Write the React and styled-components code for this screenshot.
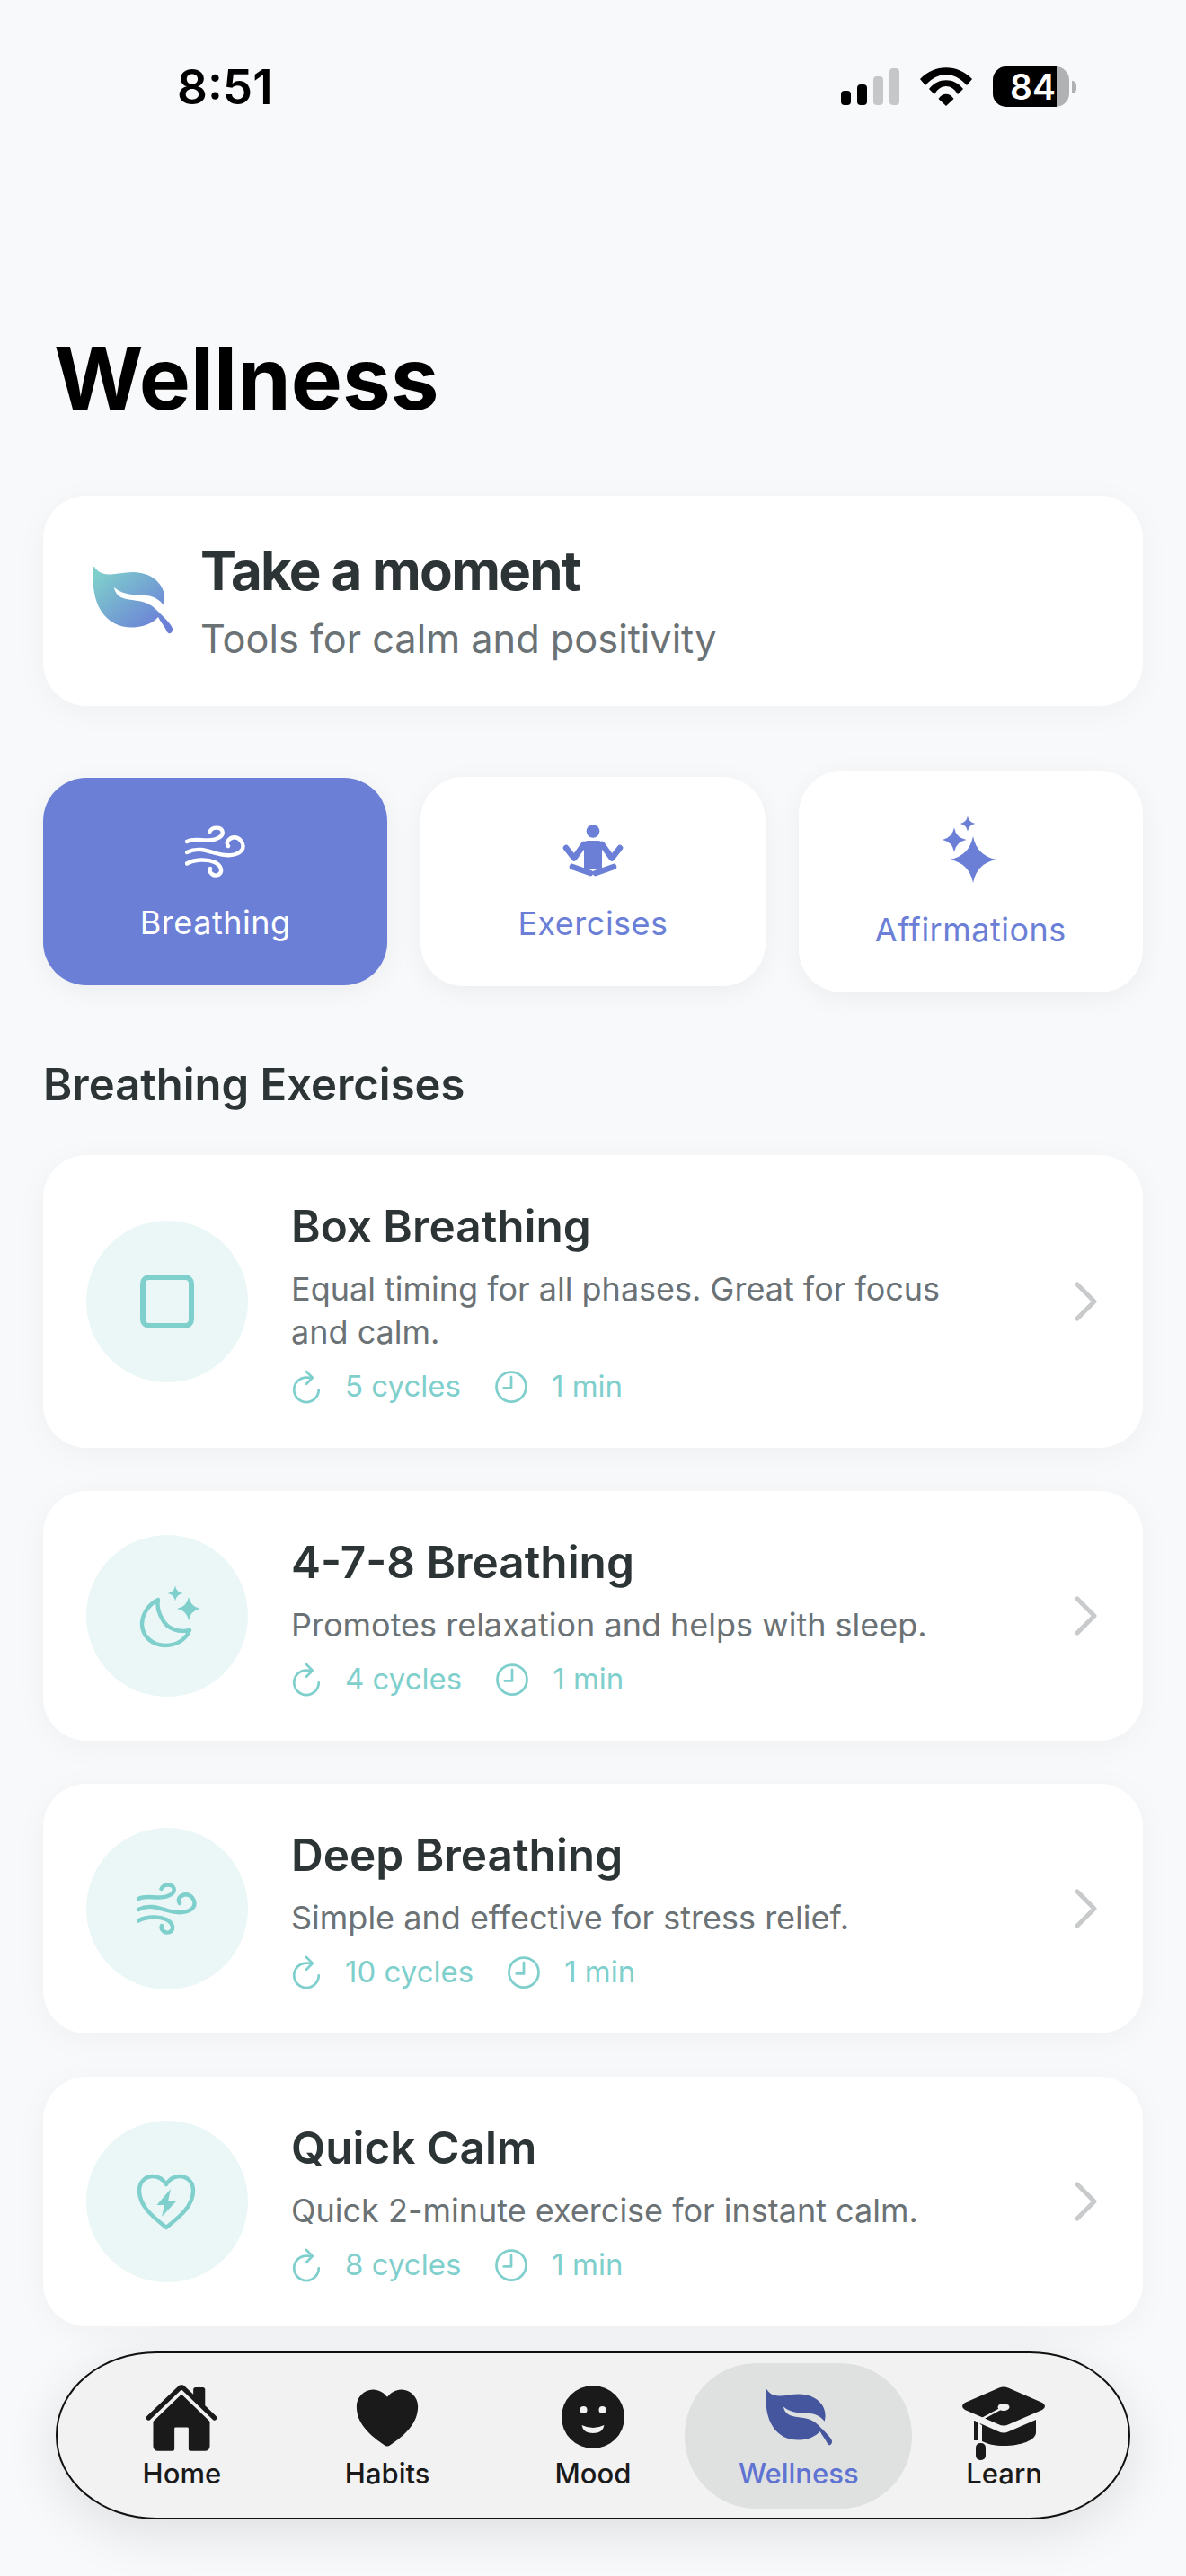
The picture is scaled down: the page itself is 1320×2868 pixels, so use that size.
import React from "react";
import styled, { createGlobalStyle } from "styled-components";
import { IoHome, IoHeart, IoRefreshOutline, IoTimeOutline } from "react-icons/io5";

const TEAL = "#7fcfcd";
const BLUE = "#6b7fd7";

const GlobalStyle = createGlobalStyle`
  html, body {
    margin: 0;
    padding: 0;
    background: #f8f9fb;
  }
  * {
    box-sizing: border-box;
  }
`;

// four pointed star, used by the sparkles and the moon icon
const star = (cx, cy, r) => {
  const k = r * 0.16;
  return `M${cx} ${cy - r}Q${cx + k} ${cy - k} ${cx + r} ${cy}Q${cx + k} ${cy + k} ${cx} ${cy + r}Q${cx - k} ${cy + k} ${cx - r} ${cy}Q${cx - k} ${cy - k} ${cx} ${cy - r}Z`;
};

const LEAF_PATH =
  "M2 0C5 5 10 8 18 8.500C28 9 40 4 54 7C70 10 80 22 80 34C80 38 79.500 41 79 42.500C75 38 70 33 60 32C48 30.500 36 33 24 23C25 30 30 35 40 36.500C52 38 62 39 70 47C79 56 88 64 89 69C89.500 74 85 76 83 72.500C80 66 76 62 73 56C68 62 58 67 46 67.500C30 68 18 62 10 50C2 38 0 22 0 4C0 1 1 -1 2 0Z";

const HeroLeaf = styled.svg`
  flex: none;
  display: block;
`;

function GradientLeaf() {
  return (
    <HeroLeaf width="89" height="76" viewBox="0 0 89 76">
      <defs>
        <linearGradient id="leafGradient" x1="0.05" y1="0.1" x2="0.85" y2="0.9">
          <stop offset="0" stopColor="#7fd0cc" />
          <stop offset="1" stopColor={BLUE} />
        </linearGradient>
      </defs>
      <path d={LEAF_PATH} fill="url(#leafGradient)" />
    </HeroLeaf>
  );
}

const NavLeafSvg = styled.svg`
  display: block;
  margin: 10px auto 0;
`;

function NavLeaf() {
  return (
    <NavLeafSvg width="74" height="64" viewBox="0 0 89 76">
      <path d={LEAF_PATH} fill="currentColor" />
    </NavLeafSvg>
  );
}

function WindIcon({ color }) {
  return (
    <svg width="68" height="58" viewBox="0 0 68 58" fill="none" stroke={color} strokeWidth="4.400" strokeLinecap="round">
      <path d="M2 18C10 14 18 17 26 16.500C36 16 43 12 41.500 6.500C40 1.500 30 1 27.500 7" />
      <path d="M2 30C14 24 24 28 34 31C44 34 58 35 63.500 27C67 20 60 12 53 13.500C47 15 45.500 20 48 23" />
      <path d="M2 42.500C10 38 24 37 33 41C41 45 42 52 37 55C32 57 26 53 28 48" />
    </svg>
  );
}

function MeditationIcon() {
  return (
    <svg width="68" height="60" viewBox="0 0 68 60" fill={BLUE}>
      <circle cx="34" cy="7.500" r="7.300" />
      <path d="M28 18H40C42 18 43.500 19 44 21V49H24V21C24.500 19 26 18 28 18Z" />
      <g fill="none" stroke={BLUE} strokeWidth="6.600" strokeLinecap="round" strokeLinejoin="round">
        <path d="M4 26L13 37.500L24 22" />
        <path d="M64 26L55 37.500L44 22" />
        <path d="M11 47L31 54" />
        <path d="M57 47L37 54" />
      </g>
    </svg>
  );
}

function SparklesIcon() {
  return (
    <svg width="62" height="80" viewBox="0 0 62 80" fill={BLUE}>
      <path d={star(34, 49, 26)} />
      <path d={star(13, 27, 13.5)} />
      <path d={star(28, 9, 8.5)} />
    </svg>
  );
}

function SquareIcon() {
  return (
    <svg width="60" height="60" viewBox="0 0 60 60" fill="none" stroke={TEAL} strokeWidth="6">
      <rect x="3" y="3" width="54" height="54" rx="7" />
    </svg>
  );
}

function MoonIcon() {
  return (
    <svg width="72" height="72" viewBox="0 0 72 72" fill="none">
      <path
        d="M26 18C12 25 8 38 8 45C8 59 20 69 34 69C47 69 57 62 61 52C48 55 37 50 32 42C27 34 24 26 26 18Z"
        stroke={TEAL}
        strokeWidth="4.400"
        strokeLinejoin="round"
      />
      <path d={star(60, 28, 13)} fill={TEAL} />
      <path d={star(45, 11, 8.5)} fill={TEAL} />
    </svg>
  );
}

function HeartBoltIcon() {
  return (
    <svg width="72" height="72" viewBox="0 0 72 72" fill="none">
      <path
        d="M35 65C20 53 5 41 5 24C5 14 12 8 20 8C27 8 32 12 35 17C38 12 43 8 50 8C58 8 65 14 65 24C65 41 50 53 35 65Z"
        stroke={TEAL}
        strokeWidth="4.400"
        strokeLinejoin="round"
      />
      <path d="M40 22L24.500 40H33L30 53L46 36H37Z" fill={TEAL} />
    </svg>
  );
}

function FaceIcon() {
  return (
    <svg width="84" height="84" viewBox="0 0 84 84">
      <circle cx="42" cy="41" r="35" fill="#1a1a1a" />
      <circle cx="31.500" cy="33" r="4" fill="#f2f2f3" />
      <circle cx="52.500" cy="33" r="4" fill="#f2f2f3" />
      <path d="M29.500 50Q42 56 54.500 50Q53 59 42 59Q31 59 29.500 50Z" fill="#f2f2f3" />
    </svg>
  );
}

const CapSvg = styled.svg`
  display: block;
  margin: 7px 0 -5px;
`;

function CapIcon() {
  return (
    <CapSvg width="93" height="82" viewBox="0 0 93 82">
      <path d="M41 1.500Q46 -0.500 51 1.500L89 18Q95 22 89 26L52 42Q46 45 40 42L3 26Q-3 22 3 18Z" fill="#1a1a1a" />
      <path d="M13 38L40 50Q46 53 52 50L82 37V51C82 60 65 66 46 66C36 66 28 64 22 61V43L13 39Z" fill="#1a1a1a" />
      <path d="M13 38V60H18V40Z" fill="#1a1a1a" />
      <path d="M46 23L18.500 38V66" fill="none" stroke="#f2f2f3" strokeWidth="2.500" />
      <ellipse cx="46" cy="23" rx="6.500" ry="4" fill="#f2f2f3" />
      <rect x="15" y="63" width="11" height="19" rx="5" fill="#1a1a1a" />
    </CapSvg>
  );
}

const Page = styled.div`
  width: 1320px;
  height: 2868px;
  overflow: hidden;
  background: #f8f9fb;
  font-family: Inter, "Noto Sans", sans-serif;
`;

const StatusBar = styled.div`
  display: flex;
  justify-content: space-between;
  align-items: flex-start;
  height: 60px;
  margin-top: 69px;
  padding: 0 122px 0 197px;
`;

const Clock = styled.div`
  font-size: 53px;
  line-height: 57px;
  font-weight: 600;
  color: #000;
`;

const StatusIcons = styled.div`
  display: flex;
  gap: 23px;
  margin-top: 5px;
`;

const Battery = styled.div`
  display: flex;
  align-items: center;
  gap: 3px;
`;

const BatteryBody = styled.div`
  display: flex;
  width: 85px;
  height: 45px;
  border-radius: 15px;
  overflow: hidden;
  background: #b0b1b3;
`;

const BatteryFill = styled.div`
  width: 71px;
  padding-right: 1px;
  background: #000;
  color: #fff;
  font-size: 39px;
  line-height: 45px;
  font-weight: 600;
  text-align: right;
`;

const BatteryNub = styled.div`
  width: 5px;
  height: 14px;
  background: #b0b1b3;
  border-radius: 0 6px 6px 0;
`;

const PageTitle = styled.h1`
  margin: 234px 0 0;
  padding-left: 60px;
  font-size: 96px;
  line-height: 116px;
  font-weight: 700;
  color: #000;
`;

const Content = styled.main`
  display: flex;
  flex-direction: column;
  padding: 73px 48px 0;
`;

const HeroCard = styled.section`
  display: flex;
  align-items: center;
  gap: 31px;
  height: 234px;
  padding-left: 55px;
  background: #fff;
  border-radius: 48px;
  box-shadow: 0 6px 36px rgba(0, 0, 0, 0.04);
`;

const HeroTitle = styled.h2`
  margin: 0;
  font-size: 60px;
  line-height: 70px;
  font-weight: 700;
  letter-spacing: -1.7px;
  color: #2d3436;
`;

const HeroSubtitle = styled.p`
  margin: 13px 0 0;
  font-size: 43.3px;
  line-height: 56px;
  font-weight: 400;
  color: #6b7275;
`;

const Tabs = styled.div`
  display: grid;
  grid-template-columns: repeat(3, 1fr);
  gap: 37px;
  align-items: center;
  margin-top: 72px;
`;

const Tab = styled.button`
  display: flex;
  flex-direction: column;
  align-items: center;
  gap: 24px;
  padding: 48px 0;
  border: 0;
  border-radius: 48px;
  font-family: inherit;
  background: ${({ $active }) => ($active ? BLUE : "#fff")};
  color: ${({ $active }) => ($active ? "#fff" : BLUE)};
  box-shadow: 0 6px 30px rgba(0, 0, 0, 0.05);
`;

const TabIcon = styled.div`
  display: flex;
  align-items: center;
  justify-content: center;
  height: ${({ $height }) => $height}px;
`;

const TabLabel = styled.span`
  font-size: 36px;
  line-height: 44px;
  font-weight: 400;
  letter-spacing: 0.5px;
`;

const SectionTitle = styled.h3`
  margin: 73px 0 0;
  font-size: 49px;
  line-height: 60px;
  font-weight: 600;
  color: #2d3436;
`;

const ExerciseList = styled.div`
  display: flex;
  flex-direction: column;
  gap: 48px;
  margin-top: 48px;
`;

const ExerciseCard = styled.article`
  display: flex;
  align-items: center;
  padding: 48px;
  background: #fff;
  border-radius: 48px;
  box-shadow: 0 6px 36px rgba(0, 0, 0, 0.04);
`;

const IconCircle = styled.div`
  flex: none;
  display: flex;
  align-items: center;
  justify-content: center;
  width: 180px;
  height: 180px;
  margin-right: 48px;
  border-radius: 50%;
  background: #eaf7f6;
`;

const ExerciseText = styled.div`
  flex: 1;
  min-width: 0;
`;

const ExerciseTitle = styled.h4`
  margin: 0;
  font-size: 49.5px;
  line-height: 62px;
  font-weight: 600;
  color: #2d3436;
`;

const ExerciseDescription = styled.p`
  margin: 15px 0 0;
  font-size: 36px;
  line-height: 48px;
  font-weight: 400;
  color: #6b7275;
`;

const MetaRow = styled.div`
  display: flex;
  gap: 34px;
  margin: 16px 0 0 -5px;
`;

const MetaItem = styled.div`
  display: flex;
  align-items: center;
  gap: 21px;
  height: 41px;
  font-size: 33px;
  line-height: 41px;
  color: ${TEAL};
`;

const FlippedClock = styled(IoTimeOutline)`
  margin-right: 2px;
  transform: scaleX(-1);
`;

const ChevronSvg = styled.svg`
  flex: none;
  margin: 0 3px 0 90px;
`;

function Chevron() {
  return (
    <ChevronSvg width="25" height="44" viewBox="0 0 25 44" fill="none" stroke="#c8cacb" strokeWidth="5" strokeLinecap="round" strokeLinejoin="round">
      <path d="M3 3L22 22L3 41" />
    </ChevronSvg>
  );
}

const BottomNav = styled.nav`
  display: grid;
  grid-template-columns: repeat(5, minmax(0, 1fr));
  width: 1196px;
  height: 187px;
  margin: 28px 0 0 62px;
  padding: 11px 24px;
  border: 2px solid #111;
  border-radius: 112px / 93px;
  background: #f2f2f3;
  box-shadow: 0 14px 60px rgba(0, 0, 0, 0.11);
`;

const NavItem = styled.a`
  justify-self: center;
  display: flex;
  flex-direction: column;
  align-items: center;
  gap: 2px;
  width: ${({ $active }) => ($active ? "253px" : "200px")};
  height: 162px;
  padding-top: 19px;
  border-radius: 80px;
  background: ${({ $active }) => ($active ? "#dfe1e1" : "transparent")};
  color: ${({ $active }) => ($active ? "#5f73d2" : "#1a1a1a")};
`;

const NavGlyph = styled.div`
  height: 84px;
  color: ${({ $color }) => $color || "#1a1a1a"};
  svg {
    display: block;
  }
`;

const NavLabel = styled.span`
  font-size: 31px;
  line-height: 36px;
  font-weight: 500;
`;

const exercises = [
  {
    title: "Box Breathing",
    description: "Equal timing for all phases. Great for focus and calm.",
    cycles: "5 cycles",
    icon: <SquareIcon />,
  },
  {
    title: "4-7-8 Breathing",
    description: "Promotes relaxation and helps with sleep.",
    cycles: "4 cycles",
    icon: <MoonIcon />,
  },
  {
    title: "Deep Breathing",
    description: "Simple and effective for stress relief.",
    cycles: "10 cycles",
    icon: <WindIcon color={TEAL} />,
  },
  {
    title: "Quick Calm",
    description: "Quick 2-minute exercise for instant calm.",
    cycles: "8 cycles",
    icon: <HeartBoltIcon />,
  },
];

const navItems = [
  { label: "Home", icon: <IoHome size={84} /> },
  { label: "Habits", icon: <IoHeart size={84} /> },
  { label: "Mood", icon: <FaceIcon /> },
  { label: "Wellness", icon: <NavLeaf />, active: true, color: "#45569e" },
  { label: "Learn", icon: <CapIcon /> },
];

export default function App() {
  return (
    <Page>
      <GlobalStyle />

      <StatusBar>
        <Clock>8:51</Clock>
        <StatusIcons>
          <svg width="65" height="45" viewBox="0 0 65 45">
            <rect x="0" y="27" width="11" height="16" rx="4" fill="#000" />
            <rect x="18" y="20" width="11" height="23" rx="4" fill="#000" />
            <rect x="36" y="11" width="11" height="32" rx="4" fill="#c6c7c9" />
            <rect x="54" y="2" width="11" height="41" rx="4" fill="#c6c7c9" />
          </svg>
          <svg width="58" height="45" viewBox="0 0 58 45" fill="#000">
            <path d="M0 14C16 -3 42 -3 58 14L52 21C38 5 20 5 6 21Z" />
            <path d="M10 25C20 12 38 12 48 25L42 31C35 19 23 19 16 31Z" />
            <path d="M20.500 36C25 29 33 29 37.500 36L29 44Z" />
          </svg>
          <Battery>
            <BatteryBody>
              <BatteryFill>84</BatteryFill>
            </BatteryBody>
            <BatteryNub />
          </Battery>
        </StatusIcons>
      </StatusBar>

      <PageTitle>Wellness</PageTitle>

      <Content>
        <HeroCard>
          <GradientLeaf />
          <div>
            <HeroTitle>Take a moment</HeroTitle>
            <HeroSubtitle>Tools for calm and positivity</HeroSubtitle>
          </div>
        </HeroCard>

        <Tabs>
          <Tab $active>
            <TabIcon $height={67}>
              <WindIcon color="#fff" />
            </TabIcon>
            <TabLabel>Breathing</TabLabel>
          </Tab>
          <Tab>
            <TabIcon $height={69}>
              <MeditationIcon />
            </TabIcon>
            <TabLabel>Exercises</TabLabel>
          </Tab>
          <Tab>
            <TabIcon $height={83}>
              <SparklesIcon />
            </TabIcon>
            <TabLabel>Affirmations</TabLabel>
          </Tab>
        </Tabs>

        <SectionTitle>Breathing Exercises</SectionTitle>

        <ExerciseList>
          {exercises.map((exercise) => (
            <ExerciseCard key={exercise.title}>
              <IconCircle>{exercise.icon}</IconCircle>
              <ExerciseText>
                <ExerciseTitle>{exercise.title}</ExerciseTitle>
                <ExerciseDescription>{exercise.description}</ExerciseDescription>
                <MetaRow>
                  <MetaItem>
                    <IoRefreshOutline size={44} />
                    {exercise.cycles}
                  </MetaItem>
                  <MetaItem>
                    <FlippedClock size={44} />1 min
                  </MetaItem>
                </MetaRow>
              </ExerciseText>
              <Chevron />
            </ExerciseCard>
          ))}
        </ExerciseList>
      </Content>

      <BottomNav>
        {navItems.map((item) => (
          <NavItem key={item.label} $active={item.active}>
            <NavGlyph $color={item.color}>{item.icon}</NavGlyph>
            <NavLabel>{item.label}</NavLabel>
          </NavItem>
        ))}
      </BottomNav>
    </Page>
  );
}
